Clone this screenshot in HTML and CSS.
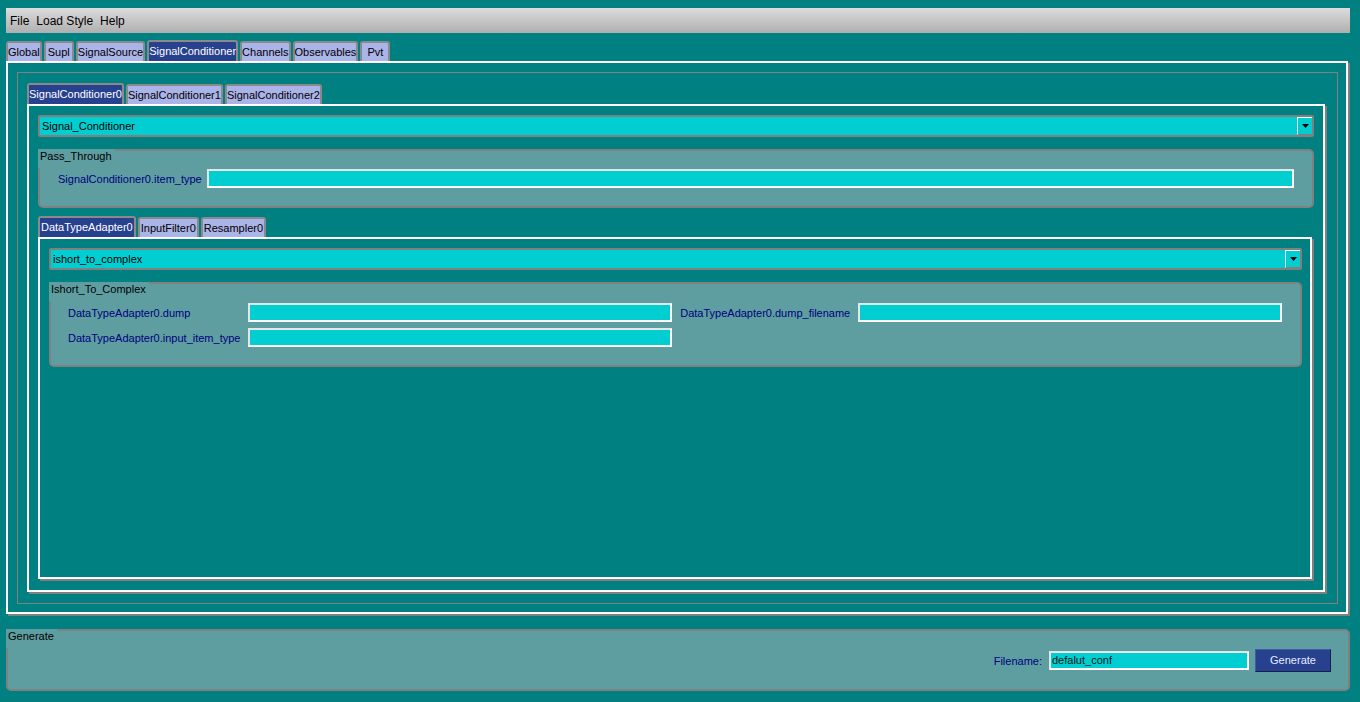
FILE: index.html
```html
<!DOCTYPE html>
<html>
<head>
<meta charset="utf-8">
<link rel="stylesheet" href="styles.css">
</head>
<body>
<div class="app">
  <div class="menubar">
    <span class="menu-item">File</span><span class="menu-item">Load Style</span><span class="menu-item">Help</span>
  </div>
  <div class="tabwidget tw-outer">
    <div class="tabbar">
      <div class="tab">Global</div>
      <div class="tab">Supl</div>
      <div class="tab">SignalSource</div>
      <div class="tab active">SignalConditioner</div>
      <div class="tab">Channels</div>
      <div class="tab">Observables</div>
      <div class="tab">Pvt</div>
    </div>
    <div class="pane pane-outer">
      <div class="frame">
        <div class="tabwidget tw-mid">
          <div class="tabbar">
            <div class="tab active">SignalConditioner0</div>
            <div class="tab">SignalConditioner1</div>
            <div class="tab">SignalConditioner2</div>
          </div>
          <div class="pane pane-mid">
            <div class="combo">
              <span class="combo-text">Signal_Conditioner</span>
              <span class="combo-btn"><svg width="7" height="4" viewBox="0 0 7 4"><polygon points="0,0 7,0 3.5,4" fill="#000"/></svg></span>
            </div>
            <div class="group group-pass">
              <div class="group-title">Pass_Through</div>
              <div class="form form-pass">
                <span class="label">SignalConditioner0.item_type</span>
                <div class="input"></div>
              </div>
            </div>
            <div class="tabwidget tw-inner">
              <div class="tabbar tabbar-inner">
                <div class="tab active">DataTypeAdapter0</div>
                <div class="tab">InputFilter0</div>
                <div class="tab">Resampler0</div>
              </div>
              <div class="pane pane-inner">
                <div class="combo">
                  <span class="combo-text">ishort_to_complex</span>
                  <span class="combo-btn"><svg width="7" height="4" viewBox="0 0 7 4"><polygon points="0,0 7,0 3.5,4" fill="#000"/></svg></span>
                </div>
                <div class="group group-ishort">
                  <div class="group-title">Ishort_To_Complex</div>
                  <div class="form form-ishort">
                    <span class="label">DataTypeAdapter0.dump</span>
                    <div class="input"></div>
                    <span class="label">DataTypeAdapter0.dump_filename</span>
                    <div class="input"></div>
                    <span class="label">DataTypeAdapter0.input_item_type</span>
                    <div class="input"></div>
                  </div>
                </div>
              </div>
            </div>
          </div>
        </div>
      </div>
    </div>
  </div>
  <div class="group group-generate">
    <div class="group-title">Generate</div>
    <div class="gen-row">
      <span class="label gen-label">Filename:</span>
      <div class="input gen-input">defalut_conf</div>
      <div class="button">Generate</div>
    </div>
  </div>
</div>
</body>
</html>
```
FILE: styles.css
```css
html, body {
  margin: 0;
  height: 100%;
}
body {
  background: #008080;
  font-family: "Liberation Sans", Arial, sans-serif;
  font-size: 11px;
  color: #000;
}
.app {
  height: 702px;
  box-sizing: border-box;
  padding: 8px 10px 11px 6px;
  display: flex;
  flex-direction: column;
}
.menubar {
  flex: none;
  height: 25px;
  display: flex;
  align-items: center;
  background: linear-gradient(#dcdcdc, #afafaf);
  font-size: 12px;
}
.menu-item {
  padding: 0 4px;
}
.menu-item + .menu-item {
  margin-left: -1px;
}
.tabwidget {
  display: flex;
  flex-direction: column;
  min-height: 0;
}
.tw-outer {
  flex: 1;
  margin-top: 7px;
  margin-right: 2px;
}
.tw-mid {
  flex: 1;
}
.tw-inner {
  flex: 1;
  margin-top: 8px;
  margin-right: 2px;
}
.tabbar {
  flex: none;
  height: 21px;
  display: flex;
  align-items: flex-end;
}
.tab {
  box-sizing: border-box;
  height: 20px;
  min-width: 30px;
  padding: 0;
  margin-right: 2px;
  border: 2px solid #8a8a8a;
  border-bottom: 0;
  border-radius: 3px 3px 0 0;
  background: #abb4e8;
  text-align: center;
  line-height: 18px;
  white-space: nowrap;
}
.tabbar-inner .tab {
  padding: 0 1px;
}
.tab.active {
  height: 21px;
  line-height: 19px;
  background: #27418f;
  color: #fff;
}
.pane {
  flex: 1;
  min-height: 0;
  display: flex;
  flex-direction: column;
  border: 2px solid #fff;
  box-shadow: 2px 2px 0 0 #808080;
}
.pane-outer {
  padding: 9px 8px 8px 9px;
}
.frame {
  flex: 1;
  display: flex;
  flex-direction: column;
  border: 1px solid #808080;
  padding: 10px 12px 11px 9px;
}
.pane-mid {
  padding: 9px 9px 11px 9px;
}
.pane-inner {
  padding: 9px 8px 9px 9px;
}
.combo {
  flex: none;
  box-sizing: border-box;
  height: 22px;
  display: flex;
  align-items: center;
  border: 2px solid #808080;
  border-radius: 2px;
  background: #00ced1;
  padding-left: 2px;
}
.combo-text {
  flex: 1;
}
.combo-btn {
  box-sizing: border-box;
  width: 15px;
  height: 18px;
  border-top: 1px solid #fff;
  border-left: 1px solid #fff;
  border-bottom: 1px solid #808080;
  display: flex;
  align-items: center;
  justify-content: center;
}
.combo-btn svg {
  display: block;
}
.group {
  flex: none;
  position: relative;
  box-sizing: border-box;
  border: 2px solid #808080;
  border-radius: 5px;
  background: #5f9ea0;
}
.group-title {
  position: absolute;
  left: -2px;
  top: -2px;
  box-sizing: border-box;
  height: 19px;
  padding: 0 3px 0 2px;
  line-height: 14px;
  background: #5f9ea0;
  white-space: nowrap;
}
.group-pass {
  margin-top: 12px;
}
.group-ishort {
  margin-top: 12px;
}
.form {
  display: grid;
  align-items: center;
  row-gap: 6px;
}
.form-pass {
  grid-template-columns: auto 1fr;
  column-gap: 5px;
  padding: 18px 18px 18px 18px;
}
.form-ishort {
  grid-template-columns: auto 1fr auto 1fr;
  column-gap: 8px;
  padding: 19px 18px 18px 17px;
}
.label {
  color: #000080;
  white-space: nowrap;
}
.input {
  box-sizing: border-box;
  height: 19px;
  border: 2px solid #fff;
  border-top-color: #e6e6e6;
  border-left-color: #e6e6e6;
  background: #00ced1;
}
.group-generate {
  margin-top: 15px;
}
.gen-row {
  display: flex;
  justify-content: flex-end;
  align-items: center;
  padding: 18px 17px 17px 17px;
}
.gen-label {
  margin-right: 7px;
}
.gen-input {
  width: 200px;
  margin-right: 6px;
  padding-left: 1px;
  line-height: 15px;
  color: #001818;
}
.button {
  box-sizing: border-box;
  width: 76px;
  height: 23px;
  line-height: 21px;
  text-align: center;
  background: #27418f;
  color: #e6ebff;
  border: 1px solid;
  border-color: #3c5bab #13224d #13224d #3c5bab;
}
```
